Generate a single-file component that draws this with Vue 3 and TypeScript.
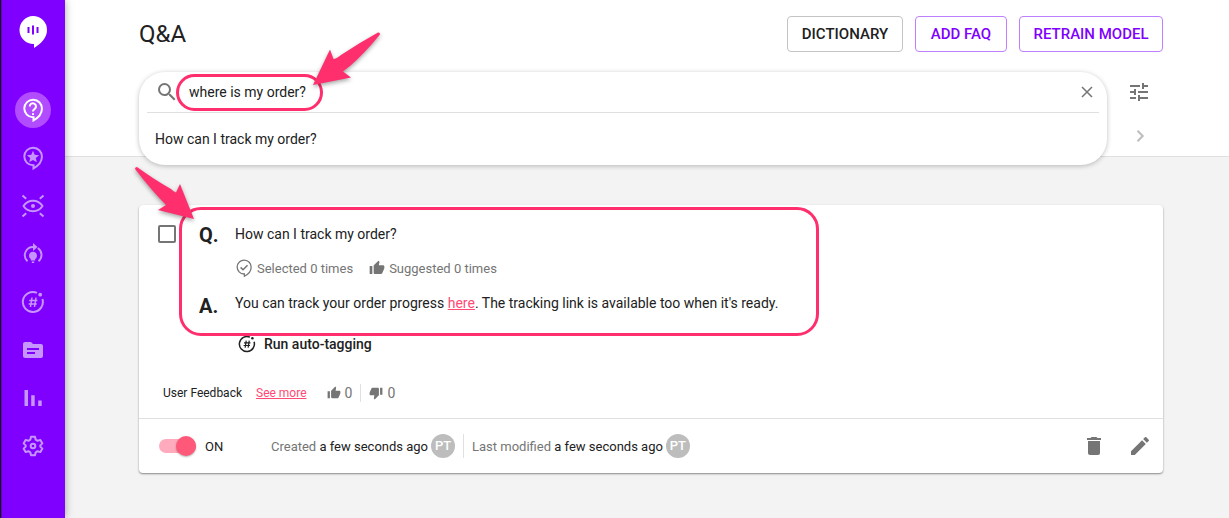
<script setup lang="ts">
import { ref } from 'vue'

interface NavItem {
  id: string
  label: string
}

const navItems: NavItem[] = [
  { id: 'qa', label: 'Q&A' },
  { id: 'featured', label: 'Featured' },
  { id: 'preview', label: 'Preview' },
  { id: 'training', label: 'Training' },
  { id: 'tags', label: 'Tags' },
  { id: 'articles', label: 'Articles' },
  { id: 'reports', label: 'Reports' },
  { id: 'settings', label: 'Settings' },
]

const active = ref('qa')
const query = ref('where is my order?')
const selected = ref(false)
const enabled = ref(true)
</script>

<template>
  <div class="app">
    <nav class="sidebar" aria-label="Main">
      <a class="logo" href="#" aria-label="Home">
        <svg width="28" height="32" viewBox="0 0 28 32">
          <path d="M14 0a14 14 0 0 1 14 14c0 8-6 13.500-13 18v-4A14 14 0 1 1 14 0z" fill="#fff" />
          <path d="M9.500 11v6M14 9.500v9M18.500 11v6" stroke="#7f00ff" stroke-width="2" />
        </svg>
      </a>
      <ul class="nav-list">
        <li v-for="item in navItems" :key="item.id">
          <button
            type="button"
            class="nav-button"
            :class="{ active: active === item.id }"
            :aria-label="item.label"
            @click="active = item.id"
          >
            <svg v-if="item.id === 'qa'" width="24" height="24" viewBox="0 0 24 24" fill="none" stroke="currentColor" stroke-width="2">
              <path d="M12.500 19.300v3.200c4.500-2.600 8.400-6.500 8.400-11.700A8.800 8.800 0 1 0 12 19.300z" />
              <path d="M8.800 8.500a3.100 3.100 0 1 1 5 2.300c-1.200.9-1.900 1.400-1.900 2.800" />
              <path d="M11 15.300h2v1.800h-2z" fill="currentColor" stroke="none" />
            </svg>
            <svg v-else-if="item.id === 'featured'" width="24" height="24" viewBox="0 0 24 24">
              <path d="M12.500 19.300v3.200c4.500-2.600 8.400-6.500 8.400-11.700A8.800 8.800 0 1 0 12 19.300z" fill="none" stroke="currentColor" stroke-width="2" />
              <path d="M12 4.800l1.700 4 4.400.4-3.300 2.900 1 4.200-3.800-2.200-3.800 2.200 1-4.200-3.300-2.900 4.400-.4z" fill="currentColor" />
            </svg>
            <svg v-else-if="item.id === 'preview'" width="24" height="24" viewBox="0 0 24 24" fill="none" stroke="currentColor" stroke-width="2">
              <path d="M2.500 12c4.500-7 14.500-7 19 0-4.500 7-14.500 7-19 0z" />
              <circle cx="12" cy="12" r="2" fill="currentColor" stroke="none" />
              <path d="M1.500 1.500l3.700 3.300M22.500 1.500l-3.700 3.300M1.500 22.500l3.700-3.300M22.500 22.500l-3.700-3.300" />
            </svg>
            <svg v-else-if="item.id === 'training'" width="24" height="24" viewBox="0 0 24 24">
              <path d="M6.500 19.200A8.200 8.200 0 0 1 12.500 5M16.800 6a8.200 8.200 0 0 1 .7 13.200" fill="none" stroke="currentColor" stroke-width="1.900" />
              <path d="M12 1l4.500 4-4.500 4z" fill="currentColor" />
              <path d="M12 9.700a4 4 0 0 1 2.200 7.300v1.600H9.800V17A4 4 0 0 1 12 9.700zM10.800 19.500h2.400v1.500h-2.400z" fill="currentColor" />
            </svg>
            <svg v-else-if="item.id === 'tags'" width="24" height="24" viewBox="0 0 24 24" fill="none" stroke="currentColor">
              <path d="M16 2.900A10 10 0 1 0 21.400 9" stroke-width="2" />
              <circle cx="19.200" cy="4.700" r="1.900" fill="currentColor" stroke="none" />
              <path d="M11 7.500l-1.500 9.500M15 7.500l-1.500 9.500M8.200 10.500h8.200M7.600 14h8.200" stroke-width="1.500" />
            </svg>
            <svg v-else-if="item.id === 'articles'" width="24" height="24" viewBox="0 0 24 24" fill="currentColor">
              <path d="M20 6h-8l-2-2H4c-1.100 0-2 .9-2 2v12c0 1.100.9 2 2 2h16c1.100 0 2-.9 2-2V8c0-1.100-.9-2-2-2zm-6 10H6v-2h8v2zm4-4H6v-2h12v2z" />
            </svg>
            <svg v-else-if="item.id === 'reports'" width="24" height="24" viewBox="0 0 24 24" fill="currentColor">
              <path d="M3.500 4h3.500v16H3.500zM10.200 9.200h3.500V20h-3.500zM17.200 14.500h3.500V20h-3.500z" />
            </svg>
            <svg v-else width="24" height="24" viewBox="0 0 24 24" fill="none" stroke="currentColor" stroke-width="2" stroke-linejoin="round">
              <circle cx="12" cy="12" r="2.300" />
              <path d="M10 2.800h4l.7 2.900 1.900 1.100 2.800-.9 2 3.500-2.100 2v1.200l2.100 2-2 3.500-2.800-.9-1.900 1.100-.7 2.900h-4l-.7-2.900-1.900-1.100-2.800.9-2-3.500 2.100-2v-1.200l-2.100-2 2-3.500 2.800.9 1.900-1.100z" />
            </svg>
          </button>
        </li>
      </ul>
    </nav>

    <div class="page">
      <header class="header">
        <div class="title-row">
          <h1>Q&amp;A</h1>
          <div class="actions">
            <button type="button" class="btn dictionary">DICTIONARY</button>
            <button type="button" class="btn accent add">ADD FAQ</button>
            <button type="button" class="btn accent retrain">RETRAIN MODEL</button>
          </div>
        </div>
        <div class="search-row">
          <div class="search-slot">
            <div class="search-panel">
              <div class="search-field">
                <label for="search" aria-label="Search questions">
                  <svg width="24" height="24" viewBox="0 0 24 24" fill="#757575">
                    <path d="M15.500 14h-.79l-.28-.27A6.471 6.471 0 0 0 16 9.500 6.500 6.500 0 1 0 9.500 16c1.610 0 3.090-.59 4.230-1.570l.27.28v.79l5 4.990L20.490 19l-4.990-5zm-6 0C7.010 14 5 11.990 5 9.500S7.010 5 9.500 5 14 7.010 14 9.500 11.990 14 9.500 14z" />
                  </svg>
                </label>
                <input id="search" v-model="query" type="text" />
                <button type="button" class="icon-button" aria-label="Clear" @click="query = ''">
                  <svg width="12" height="12" viewBox="0 0 12 12" fill="none" stroke="#757575" stroke-width="1.500">
                    <path d="M1 1l10 10M11 1L1 11" />
                  </svg>
                </button>
              </div>
              <button type="button" class="suggestion">How can I track my order?</button>
              <div class="ring ring-search"></div>
            </div>
          </div>
          <div class="search-tools">
            <button type="button" class="icon-button" aria-label="Filters">
              <svg width="24" height="24" viewBox="0 0 24 24" fill="#757575">
                <path d="M3 17v2h6v-2H3zM3 5v2h10V5H3zm10 16v-2h8v-2h-8v-2h-2v6h2zM7 9v2H3v2h4v2h2V9H7zm14 4v-2H11v2h10zm-6-4h2V7h4V5h-4V3h-2v6z" />
              </svg>
            </button>
            <button type="button" class="icon-button" aria-label="Next">
              <svg width="24" height="24" viewBox="0 0 24 24" fill="none" stroke="#bdbdbd" stroke-width="2">
                <path d="M10.500 6.800l5.200 5.200-5.200 5.200" />
              </svg>
            </button>
          </div>
        </div>
      </header>

      <main class="content">
        <article class="card">
          <div class="card-body">
            <input v-model="selected" class="checkbox" type="checkbox" aria-label="Select question" />
            <strong class="letter">Q.</strong>
            <p class="text">How can I track my order?</p>
            <div class="stats">
              <span class="stat">
                <svg width="18" height="18" viewBox="0 0 24 24" fill="none" stroke="#757575" stroke-width="1.700">
                  <path d="M12.500 20v3c5-2.500 9-6.500 9-12A9.300 9.300 0 1 0 12 20z" />
                  <path d="M7.500 11.200l3.200 3.200 6-6" stroke-width="2" />
                </svg>
                Selected 0 times
              </span>
              <span class="stat">
                <svg width="16" height="16" viewBox="0 0 24 24" fill="#757575">
                  <path d="M1 21h4V9H1v12zm22-11c0-1.100-.9-2-2-2h-6.310l.95-4.570.03-.32c0-.41-.17-.79-.44-1.060L14.170 1 7.590 7.590C7.220 7.950 7 8.450 7 9v10c0 1.100.9 2 2 2h9c.83 0 1.540-.5 1.840-1.220l3.020-7.050c.09-.23.14-.47.14-.73v-2z" />
                </svg>
                Suggested 0 times
              </span>
            </div>
            <strong class="letter answer-letter">A.</strong>
            <p class="text">You can track your order progress <a href="#">here</a>. The tracking link is available too when it's ready.</p>
            <button type="button" class="tagging">
              <svg width="18" height="18" viewBox="0 0 24 24" fill="none" stroke="currentColor">
                <path d="M16 2.900A10 10 0 1 0 21.400 9" stroke-width="2" />
                <circle cx="19.200" cy="4.200" r="1.700" fill="currentColor" stroke="none" />
                <path d="M11 7.500l-1.500 9.500M15 7.500l-1.500 9.500M8 10.500h8.600M7.400 14h8.600" stroke-width="1.600" />
              </svg>
              Run auto-tagging
            </button>
            <div class="ring ring-card"></div>
          </div>
          <div class="feedback">
            <span>User Feedback</span>
            <a href="#">See more</a>
            <span class="vote up">
              <svg width="14" height="14" viewBox="0 0 24 24" fill="#757575">
                <path d="M1 21h4V9H1v12zm22-11c0-1.100-.9-2-2-2h-6.310l.95-4.570.03-.32c0-.41-.17-.79-.44-1.060L14.170 1 7.590 7.590C7.220 7.950 7 8.450 7 9v10c0 1.100.9 2 2 2h9c.83 0 1.540-.5 1.840-1.220l3.020-7.050c.09-.23.14-.47.14-.73v-2z" />
              </svg>
              0
            </span>
            <span class="vote down">
              <svg width="14" height="14" viewBox="0 0 24 24" fill="#757575">
                <path d="M15 3H6c-.83 0-1.540.5-1.840 1.220l-3.020 7.050c-.09.23-.14.47-.14.73v2c0 1.100.9 2 2 2h6.310l-.95 4.570-.03.32c0 .41.17.79.44 1.060L9.830 23l6.590-6.590c.36-.36.58-.86.58-1.410V5c0-1.100-.9-2-2-2zm4 0v12h4V3h-4z" />
              </svg>
              0
            </span>
          </div>
          <footer class="card-footer">
            <label class="toggle">
              <input v-model="enabled" type="checkbox" role="switch" />
              <span>{{ enabled ? 'ON' : 'OFF' }}</span>
            </label>
            <div class="stamp">
              <span>Created <b>a few seconds ago</b></span>
              <span class="avatar">PT</span>
            </div>
            <div class="stamp modified">
              <span>Last modified <b>a few seconds ago</b></span>
              <span class="avatar">PT</span>
            </div>
            <div class="tools">
              <button type="button" class="icon-button" aria-label="Delete">
                <svg width="24" height="24" viewBox="0 0 24 24" fill="#757575">
                  <path d="M6 19c0 1.100.9 2 2 2h8c1.100 0 2-.9 2-2V7H6v12zM19 4h-3.500l-1-1h-5l-1 1H5v2h14V4z" />
                </svg>
              </button>
              <button type="button" class="icon-button" aria-label="Edit">
                <svg width="24" height="24" viewBox="0 0 24 24" fill="#757575">
                  <path d="M3 17.250V21h3.750L17.810 9.940l-3.750-3.750L3 17.250zM20.710 7.040a1 1 0 0 0 0-1.410l-2.340-2.340a1 1 0 0 0-1.410 0l-1.830 1.830 3.750 3.750 1.830-1.830z" />
                </svg>
              </button>
            </div>
          </footer>
          <svg class="arrow arrow-card" width="60" height="54" viewBox="0 0 60 54" aria-hidden="true">
            <path d="M0 2Q0 0 2 0Q20 13 36 22Q39 25 41 25.500L45 17L59 52L23 43L31 38Q17 24 0 2z" fill="#ff2f6e" />
          </svg>
        </article>
      </main>

      <svg class="arrow arrow-search" width="68" height="54" viewBox="0 0 68 54" aria-hidden="true">
        <path d="M67 2.500Q67 0 65 .5Q46 11 28 23Q23 27 20.500 27L17 17.500L0 53L38 45.500L30 39.500Q33 37 37 34Q51 22 67 2.500z" fill="#ff2f6e" />
      </svg>
    </div>
  </div>
</template>

<style>
body {
  margin: 0;
  background: #f3f3f3;
}
</style>

<style scoped>
* {
  box-sizing: border-box;
}

.app {
  display: flex;
  min-height: 100vh;
  font-family: Roboto, "Liberation Sans", sans-serif;
  font-size: 14px;
  color: #212121;
  background: #f3f3f3;
}

button {
  font: inherit;
  color: inherit;
  padding: 0;
  border: 0;
  background: none;
  cursor: pointer;
}

svg {
  display: block;
  flex: none;
}

a {
  color: #ff4a76;
}

.sidebar {
  flex: none;
  width: 65px;
  background: linear-gradient(to right, #1d0b2e 1px, #5a08b0 1px, #5a08b0 2px, #7f00ff 2px);
  box-shadow: 0 0 8px rgba(0, 0, 0, 0.35);
  z-index: 1;
}

.logo {
  display: flex;
  justify-content: center;
  padding-top: 16px;
}

.nav-list {
  display: flex;
  flex-direction: column;
  align-items: center;
  gap: 12px;
  margin: 44px 0 0;
  padding: 0 0 16px;
  list-style: none;
}

.nav-button {
  display: flex;
  align-items: center;
  justify-content: center;
  width: 36px;
  height: 36px;
  border-radius: 50%;
  color: #c795ff;
}

.nav-button.active {
  color: #fff;
  background: #b24cff;
}

.page {
  position: relative;
  flex: 1;
  min-width: 0;
}

.header {
  padding: 16px 66px 0 74px;
  border-bottom: 1px solid #e0e0e0;
  background: #fff;
}

.title-row {
  display: flex;
  align-items: center;
  justify-content: space-between;
}

h1 {
  margin: 0;
  font-size: 24px;
  font-weight: 400;
}

.actions {
  display: flex;
  gap: 12px;
}

.btn {
  height: 36px;
  border: 1px solid #c4c4c4;
  border-radius: 4px;
  font-size: 15px;
  font-weight: 500;
}

.accent {
  color: #7f00ff;
  border-color: #bf80ff;
}

.dictionary {
  min-width: 116px;
}

.add {
  min-width: 92px;
}

.retrain {
  min-width: 144px;
}

.search-row {
  display: flex;
  gap: 20px;
  padding-top: 20px;
}

.search-slot {
  position: relative;
  flex: 1;
  height: 84px;
}

.search-panel {
  position: absolute;
  top: 0;
  left: 0;
  right: 0;
  padding: 0 8px 4px;
  border-radius: 26px;
  background: #fff;
  box-shadow: 0 1px 5px rgba(0, 0, 0, 0.25);
  z-index: 1;
}

.search-field {
  display: flex;
  align-items: center;
  gap: 10px;
  height: 41px;
  padding: 0 0 0 8px;
  border-bottom: 1px solid #e0e0e0;
}

.search-field input {
  flex: 1;
  min-width: 0;
  padding: 0;
  border: 0;
  outline: 0;
  color: inherit;
  font: inherit;
  background: none;
}

.suggestion {
  display: block;
  width: 100%;
  height: 48px;
  padding: 4px 8px 0;
  text-align: left;
}

.search-tools {
  display: flex;
  flex-direction: column;
  gap: 20px;
  width: 36px;
  padding-top: 8px;
}

.icon-button {
  display: flex;
  align-items: center;
  justify-content: center;
  width: 24px;
  height: 24px;
}

.content {
  padding: 48px 66px 44px 74px;
}

.card {
  position: relative;
  border-radius: 4px;
  background: #fff;
  box-shadow: 0 1px 2px rgba(0, 0, 0, 0.45);
}

.card-body {
  position: relative;
  display: grid;
  grid-template-columns: 41px 36px 1fr;
  grid-template-rows: 26px 18px 28px 20px;
  row-gap: 12px;
  align-items: center;
  padding: 16px 16px 0 19px;
}

.checkbox {
  appearance: none;
  width: 18px;
  height: 18px;
  margin: 0;
  border: 2px solid #757575;
  border-radius: 2px;
}

.checkbox:checked {
  background: #7f00ff;
}

.letter {
  padding-top: 2px;
  font-size: 20px;
  font-weight: 700;
}

.text {
  margin: 0;
}

.stats {
  grid-column: 3;
  display: flex;
  gap: 16px;
  color: #757575;
  font-size: 13px;
}

.stat {
  display: flex;
  align-items: center;
  gap: 4px;
}

.answer-letter {
  grid-column: 2;
  padding-top: 6px;
}

.tagging {
  grid-column: 3;
  justify-self: start;
  display: flex;
  align-items: center;
  gap: 8px;
  margin-top: 10px;
  padding-left: 3px;
  font-size: 14px;
  font-weight: 500;
}

.feedback {
  display: flex;
  align-items: center;
  gap: 14px;
  height: 24px;
  margin-top: 32px;
  padding-left: 24px;
  font-size: 12px;
}

.vote {
  display: flex;
  align-items: center;
  gap: 4px;
  height: 18px;
  color: #757575;
  font-size: 14px;
}

.up {
  margin-left: 6px;
}

.down {
  margin-left: -6px;
  padding-left: 8px;
  border-left: 1px solid #e0e0e0;
}

.card-footer {
  display: flex;
  align-items: center;
  height: 55px;
  margin-top: 13px;
  padding: 0 11px 0 20px;
  border-top: 1px solid #e0e0e0;
  font-size: 13px;
}

.toggle {
  display: flex;
  align-items: center;
  gap: 9px;
  width: 112px;
}

.toggle input {
  appearance: none;
  display: flex;
  align-items: center;
  width: 37px;
  height: 14px;
  margin: 0;
  border-radius: 7px;
  background: #ffabbd;
}

.toggle input::before {
  content: "";
  width: 20px;
  height: 20px;
  border-radius: 50%;
  background: #ff5879;
  box-shadow: 0 1px 2px rgba(0, 0, 0, 0.3);
}

.toggle input:checked {
  justify-content: flex-end;
}

.stamp {
  display: flex;
  align-items: center;
  gap: 3px;
  color: #757575;
}

.stamp b {
  color: #212121;
  font-weight: 400;
}

.modified {
  margin-left: 8px;
  padding-left: 8px;
  border-left: 1px solid #e0e0e0;
}

.avatar {
  width: 24px;
  border-radius: 50%;
  background: #bdbdbd;
  color: #fff;
  font-size: 13px;
  font-weight: 500;
  line-height: 24px;
  text-align: center;
}

.tools {
  display: flex;
  gap: 22px;
  margin-left: auto;
}

/* Callout outlines and arrows drawn over the page */
.ring {
  position: absolute;
  border: 3px solid #ff2f6e;
  pointer-events: none;
  z-index: 1;
}

.ring-search {
  top: 2px;
  left: 37px;
  width: 147px;
  height: 37px;
  border-radius: 19px;
}

.ring-card {
  top: 2px;
  left: 40px;
  width: 640px;
  height: 129px;
  border-radius: 22px;
}

.arrow {
  position: absolute;
  pointer-events: none;
  filter: drop-shadow(0 2px 2px rgba(0, 0, 0, 0.35));
  overflow: visible;
  z-index: 2;
}

.arrow-card {
  top: -38px;
  left: -4px;
}

.arrow-search {
  top: 32px;
  left: 248px;
}
</style>
